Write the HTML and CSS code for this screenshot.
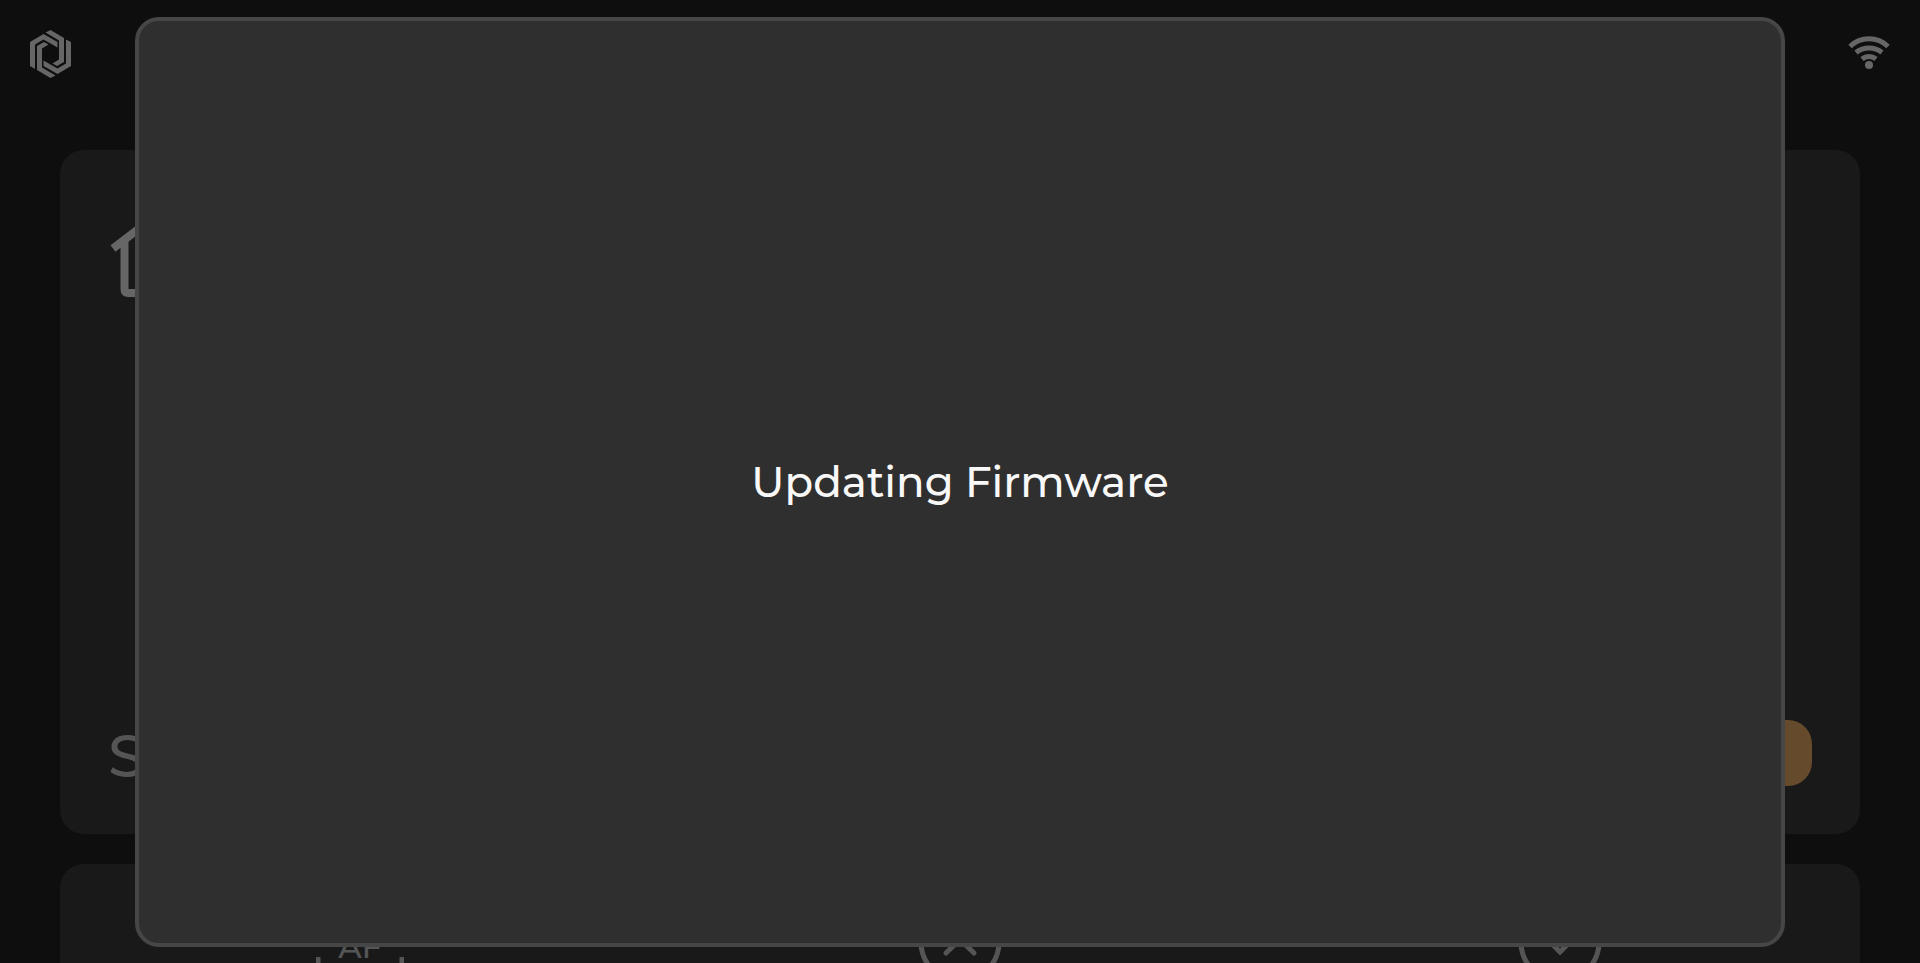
FILE: index.html
```
<!DOCTYPE html>
<html lang="en">
<head>
	<meta charset="UTF-8">
	<meta name="viewport" content="width=device-width, initial-scale=1">
	<title>Updating Firmware</title>
	<link rel="stylesheet" href="styles.css">
</head>
<body>
	<div class="page">
		<header class="topbar">
			<svg class="logo" viewBox="0 0 41 48">
				<path d="M0 12 13.500 4 27.500 12V17.500L13.500 9.500 5 14.500V39L0 36Z"/>
				<path d="M15.500 2.500 20.500 0 34 8V32L27 36 22.500 33.500 29 29.500V10.500Z"/>
				<path d="M36 9.500 41 12V36L27.500 44 13.500 36V30.500L27.500 38.500 36 33.500Z"/>
				<path d="M25.500 45.500 20.500 48 7 40V16L14 12 18.500 14.500 12 18.500V37.500Z"/>
			</svg>
			<svg class="wifi" viewBox="0 0 42 32">
				<path d="M2 9.500A27.400 27.400 0 0 1 40 9.500M8 15.500A21 21 0 0 1 34 15.500M14 22A11 11 0 0 1 28 22"/>
				<circle cx="21" cy="28" r="4"/>
			</svg>
		</header>

		<main class="cards">
			<section class="card status">
				<svg class="home" viewBox="0 0 96 100">
					<path d="M5 50.500 48 17.500 91 50.500M16.500 43V91Q16.500 95 20.500 95H75.500Q79.500 95 79.500 91V43"/>
				</svg>
				<div class="status-row">
					<h1>S</h1>
					<button type="button" class="action" aria-label="Action"></button>
				</div>
			</section>

			<section class="card controls">
				<svg class="mode" viewBox="0 0 88 84">
					<path d="M2 57V84M86 57V84"/>
					<text x="44" y="58">AF</text>
				</svg>
				<svg class="round" viewBox="0 0 84 84">
					<circle cx="42" cy="42" r="39"/>
					<path d="M28 26 56 53M56 26 28 53"/>
				</svg>
				<svg class="round" viewBox="0 0 84 84">
					<circle cx="42" cy="42" r="39"/>
					<path d="M28 38 42 52 56 38"/>
				</svg>
			</section>
		</main>
	</div>

	<div class="overlay">
		<div class="modal" role="dialog" aria-modal="true">
			<p>Updating Firmware</p>
		</div>
	</div>
</body>
</html>
```
FILE: styles.css
```
* {
	box-sizing: border-box;
	margin: 0;
	padding: 0;
}

body {
	height: 100vh;
	overflow: hidden;
	background: #232323;
	color: #d4d4d4;
	font-family: Montserrat, Inter, sans-serif;
	font-weight: 500;
}

.page {
	height: 100vh;
	overflow: hidden;
}

.topbar {
	display: flex;
	justify-content: space-between;
	padding: 30px;
	height: 150px;
}

.logo {
	width: 41px;
	height: 48px;
	fill: #fff;
}

.wifi {
	width: 42px;
	height: 32px;
	margin-top: 7px;
	overflow: visible;
	fill: #fff;
}

.wifi path {
	fill: none;
	stroke: #fff;
	stroke-width: 5;
}

.cards {
	display: flex;
	flex-direction: column;
	gap: 30px;
	padding: 0 60px;
}

.card {
	background: #3f3f3f;
	border-radius: 24px;
}

.status {
	display: flex;
	flex-direction: column;
	justify-content: space-between;
	height: 71vh;
	padding: 48px;
}

.home {
	width: 96px;
	height: 100px;
	fill: none;
	stroke: #fff;
	stroke-width: 8;
}

.status-row {
	display: flex;
	align-items: flex-end;
	justify-content: space-between;
}

h1 {
	font-size: 60px;
	font-weight: 500;
	line-height: 60px;
}

.action {
	width: 240px;
	height: 66px;
	border: none;
	border-radius: 24px;
	background: #fdb96c;
}

.controls {
	display: grid;
	grid-template-columns: repeat(3, 1fr);
	justify-items: center;
	padding: 36px 0;
}

.mode {
	width: 88px;
	height: 84px;
	stroke: #d4d4d4;
	stroke-width: 5;
}

.mode text {
	fill: #d4d4d4;
	stroke: none;
	font-size: 32px;
	text-anchor: middle;
}

.round {
	width: 84px;
	height: 84px;
	fill: none;
	stroke: #d4d4d4;
	stroke-width: 5;
	stroke-linecap: round;
}

.overlay {
	position: fixed;
	inset: 0;
	padding: 17px 135px 16px;
	background: rgba(0, 0, 0, .6);
}

.modal {
	display: flex;
	align-items: center;
	justify-content: center;
	height: 100%;
	border: 4px solid #464646;
	border-radius: 24px;
	background: #2f2f2f;
	color: #f8f8f8;
	font-size: 42px;
	line-height: 52px;
}
```
